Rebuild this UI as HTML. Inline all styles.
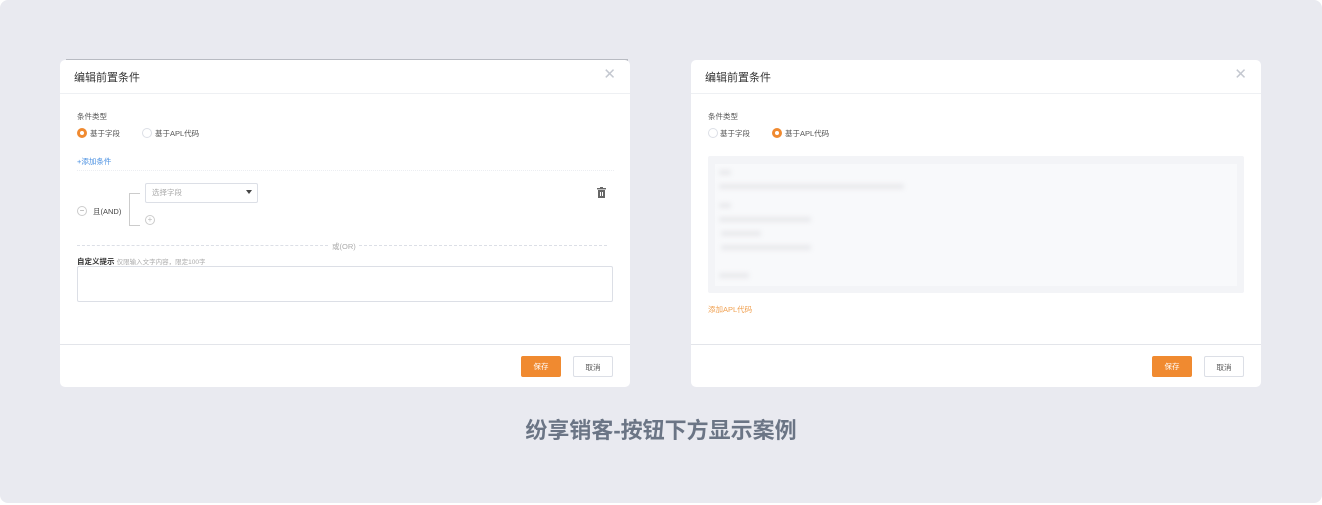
<!DOCTYPE html>
<html><head><meta charset="utf-8"><style>
*{margin:0;padding:0;box-sizing:border-box}
body{width:1322px;height:505px;background:#fff;position:relative;overflow:hidden;font-family:"Liberation Sans","Noto Sans CJK SC",sans-serif;color:#333}
.bg{position:absolute;left:0;top:0;width:1322px;height:503px;background:#e9eaf0;border-radius:8px}
.a{position:absolute}
.dlg{position:absolute;top:60px;width:570px;height:327px;background:#fff;border-radius:5px}
.hd{position:absolute;left:0;top:0;width:100%;height:34px;border-bottom:1px solid #eef0f3}
.hd span{position:absolute;left:14px;top:9px;font-size:11px;color:#333}
.x{position:absolute;right:14px;top:5px;font-size:15px;color:#c4c8d0}
.ft{position:absolute;left:0;top:284px;width:100%;border-top:1px solid #e3e5ea}
.t{font-size:7.5px;color:#555;position:absolute;white-space:nowrap}
.rad{position:absolute;width:10px;height:10px;border-radius:50%;border:1px solid #dcdfe6}
.rad.on{border:3px solid #f08a30}
.btn{position:absolute;top:296px;width:40px;height:21px;border-radius:2px;font-size:7.5px;text-align:center;line-height:21px}
.save{background:#f08a30;color:#fff}
.cancel{border:1px solid #dcdfe6;color:#555;background:#fff}
.bl{position:absolute;height:5px;background:#e8e9ec;filter:blur(2.5px);border-radius:2px}
</style></head><body>
<div class="bg"></div>
<div class="a" style="left:66px;top:59px;width:562px;height:2px;background:#b8bbc2"></div>
<!-- left -->
<div class="dlg" style="left:60px">
 <div class="hd"><span>编辑前置条件</span><div class="x">✕</div></div>
 <div class="t" style="left:17px;top:51px">条件类型</div>
 <div class="rad on" style="left:17px;top:68px"></div><div class="t" style="left:30px;top:68px">基于字段</div>
 <div class="rad" style="left:82px;top:68px"></div><div class="t" style="left:95px;top:68px">基于APL代码</div>
 <div class="t" style="left:17px;top:96px;color:#4a90e2">+添加条件</div>
 <div class="a" style="left:17px;top:110px;width:537px;border-top:1px dotted #eceef2"></div>
 <div class="a" style="left:85px;top:123px;width:113px;height:20px;border:1px solid #dcdfe6;border-radius:2px"></div>
 <div class="t" style="left:92px;top:127px;color:#aaa">选择字段</div>
 <div class="a" style="left:186px;top:130px;width:0;height:0;border-left:3px solid transparent;border-right:3px solid transparent;border-top:4px solid #444"></div>
 <div class="a" style="left:69px;top:133px;width:11px;height:33px;border:1px solid #ccc;border-right:none"></div>
 <div class="a" style="left:85px;top:155px;width:10px;height:10px;border:1px solid #ccc;border-radius:50%;font-size:8px;color:#bbb;line-height:8px;text-align:center">+</div>
 <div class="a" style="left:17px;top:146px;width:10px;height:10px;border:1px solid #ccc;border-radius:50%;font-size:8px;color:#999;line-height:7px;text-align:center">−</div>
 <div class="t" style="left:33px;top:146px;color:#444">且(AND)</div>
 <svg class="a" style="left:537px;top:127px" width="9" height="11" viewBox="0 0 9 11"><rect x="0" y="1" width="9" height="1.4" fill="#666"/><rect x="3" y="0" width="3" height="1.5" fill="#666"/><rect x="1" y="3" width="7" height="8" fill="#666"/><rect x="3" y="5" width="1" height="4" fill="#fff"/><rect x="5" y="5" width="1" height="4" fill="#fff"/></svg>
 <div class="a" style="left:17px;top:185px;width:251px;border-top:1px dashed #dcdfe6"></div>
 <div class="t" style="left:272px;top:181px;color:#aaa">或(OR)</div>
 <div class="a" style="left:299px;top:185px;width:248px;border-top:1px dashed #dcdfe6"></div>
 <div class="t" style="left:17px;top:196px;color:#333;font-weight:bold">自定义提示 <span style="font-weight:normal;color:#aaa;font-size:6.5px">仅限输入文字内容，限定100字</span></div>
 <div class="a" style="left:17px;top:206px;width:536px;height:36px;border:1px solid #dcdfe6;border-radius:2px"></div>
 <div class="ft"></div>
 <div class="btn save" style="left:461px">保存</div>
 <div class="btn cancel" style="left:513px">取消</div>
</div>
<!-- right -->
<div class="dlg" style="left:691px">
 <div class="hd"><span>编辑前置条件</span><div class="x">✕</div></div>
 <div class="t" style="left:17px;top:51px">条件类型</div>
 <div class="rad" style="left:17px;top:68px"></div><div class="t" style="left:29px;top:68px">基于字段</div>
 <div class="rad on" style="left:81px;top:68px"></div><div class="t" style="left:94px;top:68px">基于APL代码</div>
 <div class="a" style="left:17px;top:96px;width:536px;height:137px;background:#f3f4f7;border-radius:2px"></div>
 <div class="a" style="left:24px;top:104px;width:522px;height:122px;background:#f8f9fb"></div>
 <div class="bl" style="left:28px;top:110px;width:12px"></div>
 <div class="bl" style="left:28px;top:124px;width:185px"></div>
 <div class="bl" style="left:28px;top:143px;width:12px"></div>
 <div class="bl" style="left:28px;top:157px;width:92px"></div>
 <div class="bl" style="left:30px;top:171px;width:40px"></div>
 <div class="bl" style="left:30px;top:185px;width:90px"></div>
 <div class="bl" style="left:28px;top:213px;width:30px"></div>
 <div class="t" style="left:17px;top:244px;color:#f0a050">添加APL代码</div>
 <div class="ft"></div>
 <div class="btn save" style="left:461px">保存</div>
 <div class="btn cancel" style="left:513px">取消</div>
</div>
<div class="a" style="left:0;width:1322px;top:413px;text-align:center;font-size:22px;font-weight:bold;color:#6b7585">纷享销客-按钮下方显示案例</div>
</body></html>
